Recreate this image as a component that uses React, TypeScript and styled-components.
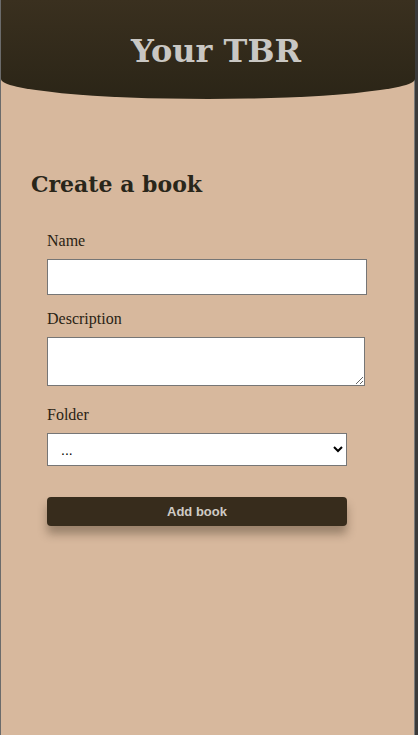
import React from "react";
import styled, { createGlobalStyle } from "styled-components";

const Global = createGlobalStyle`
  html, body { margin: 0; padding: 0; }
  body {
    background: #d7b89d;
    font-family: "Liberation Serif", "Times New Roman", serif;
  }
`;

const Frame = styled.div`
  box-sizing: border-box;
  width: 418px;
  min-height: 735px;
  border-left: 1px solid #6b6b6b;
  border-right: 3px solid #3a3a3a;
  box-shadow: inset -1px 0 0 #7a7a7a;
  background: #d7b89d;
`;

const Header = styled.header`
  height: 99px;
  display: flex;
  align-items: center;
  justify-content: center;
  padding-left: 16px;
  padding-top: 2px;
  box-sizing: border-box;
  background: linear-gradient(to bottom, #3a301f 0%, #2b2517 100%);
  border-bottom-left-radius: 50% 20px;
  border-bottom-right-radius: 50% 20px;
`;

const Title = styled.h1`
  margin: 0;
  font-family: "DejaVu Serif", Georgia, serif;
  font-weight: bold;
  font-size: 32px;
  color: #c9c7c3;
`;

const Main = styled.main`
  padding: 72px 30px 0 30px;
`;

const Heading = styled.h2`
  margin: 0 0 35px 0;
  font-family: "DejaVu Serif", Georgia, serif;
  font-weight: bold;
  font-size: 22px;
  color: #29261a;
`;

const Form = styled.form`
  display: flex;
  flex-direction: column;
  padding-left: 16px;
`;

const Field = styled.div<{ $gap: number }>`
  display: flex;
  flex-direction: column;
  margin-bottom: ${(p) => p.$gap}px;
`;

const Label = styled.label`
  font-size: 16px;
  color: #2a2314;
  line-height: 18px;
  margin-bottom: 9px;
`;

const Input = styled.input`
  box-sizing: border-box;
  width: 320px;
  height: 36px;
  border: 1px solid #767676;
  background: #fff;
  margin: 0;
`;

const TextArea = styled.textarea`
  box-sizing: border-box;
  width: 318px;
  height: 49px;
  border: 1px solid #767676;
  background: #fff;
  margin: 0;
  resize: both;
`;

const Select = styled.select`
  box-sizing: border-box;
  width: 300px;
  height: 33px;
  border: 1px solid #767676;
  background: #fff;
  padding: 0 9px;
  font-family: "Liberation Sans", Arial, sans-serif;
  font-size: 14px;
  color: #000;
  margin: 0;
`;

const Button = styled.button`
  box-sizing: border-box;
  width: 300px;
  height: 29px;
  border: none;
  border-radius: 4px;
  background: #372c1c;
  color: #cfcbc5;
  font-family: "Liberation Sans", Arial, sans-serif;
  font-weight: bold;
  font-size: 13px;
  box-shadow: 0 8px 10px rgba(40, 30, 15, 0.35);
  cursor: pointer;
`;

export default function App() {
  return (
    <>
      <Global />
      <Frame>
        <Header>
          <Title>Your TBR</Title>
        </Header>
        <Main>
          <Heading>Create a book</Heading>
          <Form onSubmit={(e) => e.preventDefault()}>
            <Field $gap={15}>
              <Label htmlFor="name">Name</Label>
              <Input id="name" type="text" />
            </Field>
            <Field $gap={20}>
              <Label htmlFor="desc">Description</Label>
              <TextArea id="desc" />
            </Field>
            <Field $gap={31}>
              <Label htmlFor="folder">Folder</Label>
              <Select id="folder" defaultValue="">
                <option value="">...</option>
              </Select>
            </Field>
            <Button type="submit">Add book</Button>
          </Form>
        </Main>
      </Frame>
    </>
  );
}
